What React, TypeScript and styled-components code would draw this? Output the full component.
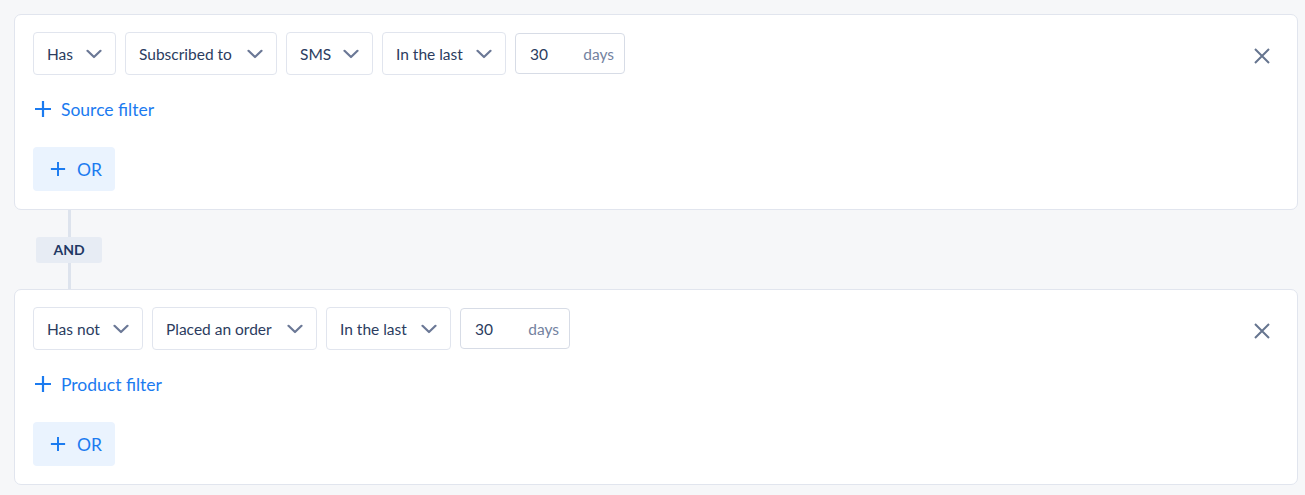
import React from "react";
import styled, { createGlobalStyle } from "styled-components";

const GlobalStyle = createGlobalStyle`
  html, body {
    margin: 0;
    padding: 0;
    background: #f6f7f9;
    font-family: "Lato", "Noto Sans", sans-serif;
  }
`;

type Select = { label: string; width: number };
type Condition = { selects: Select[]; filter: string };

const conditions: Condition[] = [
  {
    selects: [
      { label: "Has", width: 83 },
      { label: "Subscribed to", width: 152 },
      { label: "SMS", width: 87 },
      { label: "In the last", width: 124 },
    ],
    filter: "Source filter",
  },
  {
    selects: [
      { label: "Has not", width: 110 },
      { label: "Placed an order", width: 165 },
      { label: "In the last", width: 125 },
    ],
    filter: "Product filter",
  },
];

const Chevron = () => (
  <svg width="16" height="10" viewBox="0 0 16 10" fill="none">
    <path d="M1.5 1.8L8 8l6.5-6.2" stroke="#6b7896" strokeWidth="2.2" strokeLinecap="round" strokeLinejoin="round" />
  </svg>
);

const Plus = ({ size }: { size: number }) => (
  <svg width={size} height={size} viewBox="0 0 18 18" fill="none">
    <path d="M9 1v16M1 9h16" stroke="#1b7bf0" strokeWidth="2.2" />
  </svg>
);

const CloseIcon = () => (
  <svg width="18" height="18" viewBox="0 0 18 18" fill="none">
    <path d="M2 2l14 14M16 2L2 16" stroke="#66758f" strokeWidth="2" />
  </svg>
);

const App = () => {
  return (
    <>
      <GlobalStyle />
      <Page>
        {conditions.map((c, i) => (
          <React.Fragment key={i}>
            {i > 0 && (
              <Connector>
                <Line />
                <AndBadge>AND</AndBadge>
                <Line />
              </Connector>
            )}
            <Card>
              <TopRow>
                <Selects>
                  {c.selects.map((s) => (
                    <Dropdown key={s.label} $width={s.width}>
                      <span>{s.label}</span>
                      <Chevron />
                    </Dropdown>
                  ))}
                  <DaysInput>
                    <span>30</span>
                    <Unit>days</Unit>
                  </DaysInput>
                </Selects>
                <CloseButton>
                  <CloseIcon />
                </CloseButton>
              </TopRow>
              <FilterLink>
                <Plus size={18} />
                <span>{c.filter}</span>
              </FilterLink>
              <OrButton>
                <Plus size={16} />
                <span>OR</span>
              </OrButton>
            </Card>
          </React.Fragment>
        ))}
      </Page>
    </>
  );
};

export default App;

const Page = styled.div`
  padding: 14px 7px 0 14px;
  display: flex;
  flex-direction: column;
`;

const Card = styled.div`
  background: #ffffff;
  border: 1px solid #e1e5ee;
  border-radius: 7px;
  padding: 17px 18px 18px 18px;
  display: flex;
  flex-direction: column;
  align-items: flex-start;
`;

const TopRow = styled.div`
  width: 100%;
  display: flex;
  align-items: center;
  justify-content: space-between;
`;

const Selects = styled.div`
  display: flex;
  align-items: center;
  gap: 9px;
`;

const Dropdown = styled.div<{ $width: number }>`
  box-sizing: border-box;
  width: ${(p) => p.$width}px;
  height: 43px;
  padding: 0 13px;
  border: 1px solid #e1e5ee;
  border-radius: 4px;
  display: flex;
  align-items: center;
  justify-content: space-between;
  font-size: 15.5px;
  color: #2b3c60;
`;

const DaysInput = styled.div`
  box-sizing: border-box;
  width: 110px;
  height: 41px;
  padding: 0 10px 0 14px;
  border: 1px solid #d7dce6;
  border-radius: 4px;
  display: flex;
  align-items: center;
  justify-content: space-between;
  font-size: 15.5px;
  color: #2b3c60;
`;

const Unit = styled.span`
  color: #7482a0;
`;

const CloseButton = styled.div`
  width: 32px;
  height: 32px;
  margin: 5px 1px 0 0;
  display: flex;
  align-items: center;
  justify-content: center;
`;

const FilterLink = styled.div`
  margin-top: 24px;
  height: 20px;
  display: flex;
  align-items: center;
  gap: 9px;
  padding-left: 1px;
  font-size: 17.5px;
  color: #1b7bf0;
`;

const OrButton = styled.div`
  margin-top: 28px;
  box-sizing: border-box;
  width: 82px;
  height: 44px;
  padding-left: 17px;
  display: flex;
  align-items: center;
  gap: 11px;
  border-radius: 4px;
  background: #eaf3fe;
  font-size: 17.5px;
  color: #1b7bf0;
`;

const Connector = styled.div`
  width: 66px;
  margin-left: 22px;
  height: 79px;
  display: flex;
  flex-direction: column;
  align-items: center;
`;

const Line = styled.div`
  flex: 1;
  width: 3px;
  background: #dde3ed;
`;

const AndBadge = styled.div`
  width: 66px;
  height: 26px;
  border-radius: 3px;
  background: #e7ecf4;
  display: flex;
  align-items: center;
  justify-content: center;
  font-size: 14px;
  font-weight: 700;
  color: #1f3864;
`;
